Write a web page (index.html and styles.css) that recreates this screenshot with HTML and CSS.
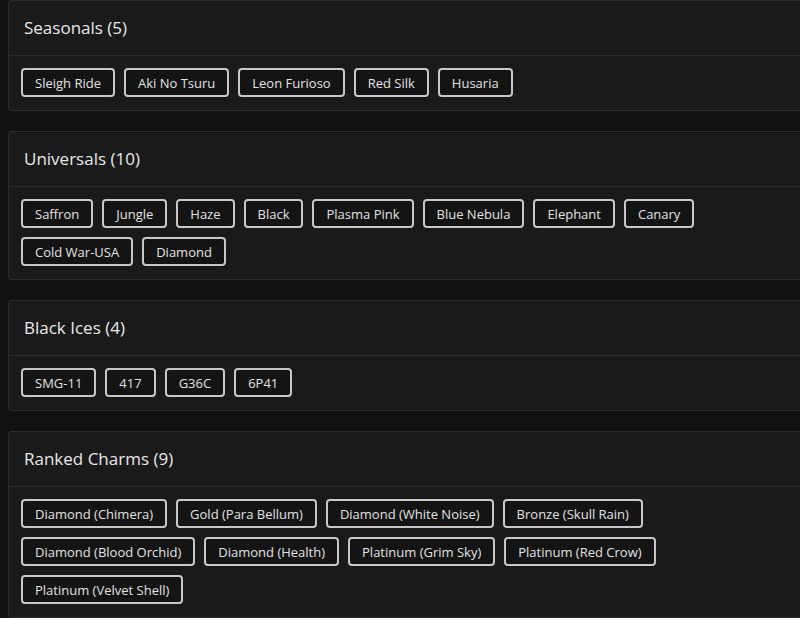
FILE: index.html
```html
<!DOCTYPE html>
<html>
<head>
<meta charset="utf-8">
<link rel="stylesheet" href="styles.css">
</head>
<body>
<div class="page">
  <section class="card">
    <div class="card-header"><h2 class="card-title">Seasonals (5)</h2></div>
    <div class="card-body">
      <span class="tag">Sleigh Ride</span>
      <span class="tag">Aki No Tsuru</span>
      <span class="tag">Leon Furioso</span>
      <span class="tag">Red Silk</span>
      <span class="tag">Husaria</span>
    </div>
  </section>
  <section class="card">
    <div class="card-header"><h2 class="card-title">Universals (10)</h2></div>
    <div class="card-body">
      <span class="tag">Saffron</span>
      <span class="tag">Jungle</span>
      <span class="tag">Haze</span>
      <span class="tag">Black</span>
      <span class="tag">Plasma Pink</span>
      <span class="tag">Blue Nebula</span>
      <span class="tag">Elephant</span>
      <span class="tag">Canary</span>
      <span class="tag">Cold War-USA</span>
      <span class="tag">Diamond</span>
    </div>
  </section>
  <section class="card">
    <div class="card-header"><h2 class="card-title">Black Ices (4)</h2></div>
    <div class="card-body">
      <span class="tag">SMG-11</span>
      <span class="tag">417</span>
      <span class="tag">G36C</span>
      <span class="tag">6P41</span>
    </div>
  </section>
  <section class="card">
    <div class="card-header"><h2 class="card-title">Ranked Charms (9)</h2></div>
    <div class="card-body">
      <span class="tag">Diamond (Chimera)</span>
      <span class="tag">Gold (Para Bellum)</span>
      <span class="tag">Diamond (White Noise)</span>
      <span class="tag">Bronze (Skull Rain)</span>
      <span class="tag">Diamond (Blood Orchid)</span>
      <span class="tag">Diamond (Health)</span>
      <span class="tag">Platinum (Grim Sky)</span>
      <span class="tag">Platinum (Red Crow)</span>
      <span class="tag">Platinum (Velvet Shell)</span>
    </div>
  </section>
</div>
</body>
</html>
```
FILE: styles.css
```css
html, body {
  margin: 0;
  padding: 0;
  background: #111111;
  overflow: hidden;
  height: 100%;
}
body {
  font-family: "Open Sans", "Noto Sans", sans-serif;
  color: #e6e6e6;
}
.page {
  display: flex;
  flex-direction: column;
  gap: 20px;
  padding: 0 0 0 8px;
  width: 820px;
}
.card {
  background: #1a1a1a;
  border: 1px solid #2c2c2c;
  border-radius: 3px;
}
.card-header {
  height: 54px;
  box-sizing: border-box;
  display: flex;
  align-items: center;
  padding: 0 15px 2px 15px;
  border-bottom: 1px solid #2c2c2c;
  height: 55px;
}
.card-title {
  margin: 0;
  font-size: 17px;
  font-weight: 500;
  color: #e8e8e8;
}
.card-body {
  display: flex;
  flex-wrap: wrap;
  gap: 9px;
  padding: 12px 12px 13px 12px;
}
.tag {
  display: inline-flex;
  align-items: center;
  height: 29px;
  box-sizing: border-box;
  padding: 0 12px;
  border: 2px solid #c8c8c8;
  border-radius: 4px;
  background: #141414;
  font-size: 13px;
  color: #e2e2e2;
}
```
